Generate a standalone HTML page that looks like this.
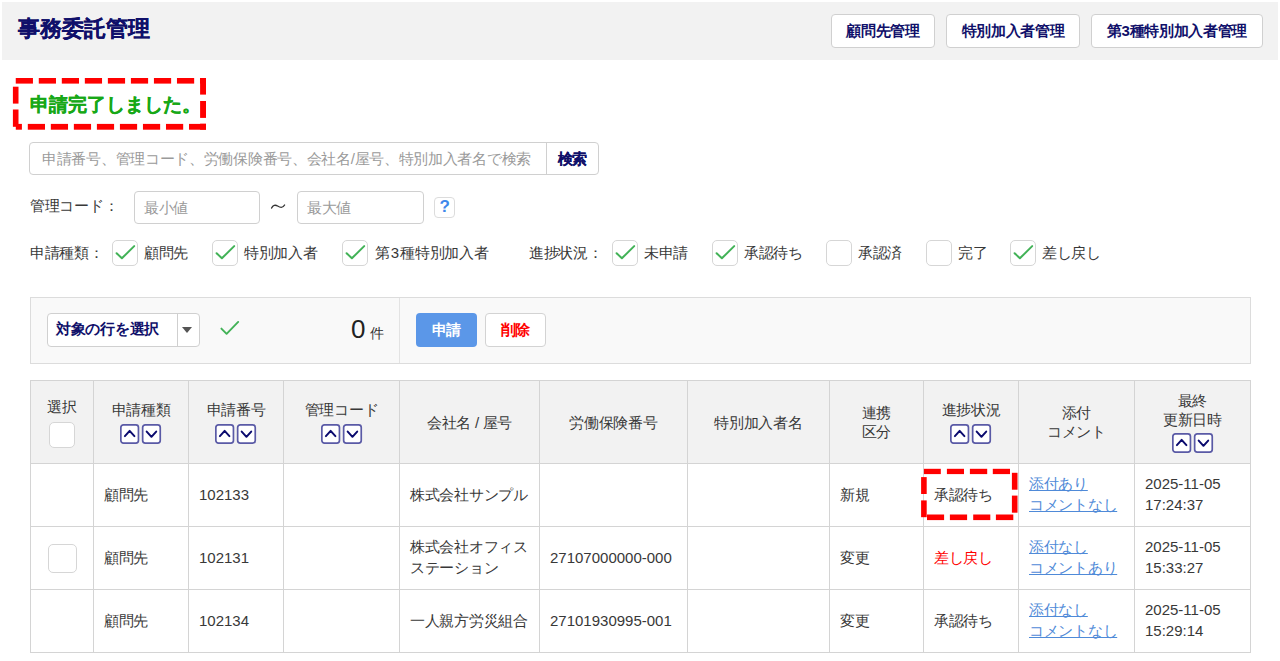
<!DOCTYPE html>
<html lang="ja">
<head>
<meta charset="utf-8">
<title>事務委託管理</title>
<style>
*{box-sizing:border-box}
html,body{margin:0;padding:0;background:#fff}
body{width:1280px;height:661px;position:relative;overflow:hidden;font-family:"Liberation Sans",sans-serif;color:#333;font-size:15px;letter-spacing:-0.3px}
.abs{position:absolute}
.hdr{left:2px;top:2px;width:1276px;height:58px;background:#f2f2f2}
.title{left:18px;top:15px;font-size:22px;letter-spacing:0;font-weight:bold;color:#10106a;-webkit-text-stroke:0.2px #10106a;line-height:28px;white-space:nowrap}
.nbtn{top:14px;height:34px;background:#fff;border:1px solid #d0d0d0;border-radius:4px;font-weight:bold;color:#10106a;font-size:15px;line-height:32px;text-align:center;white-space:nowrap}
.msg{left:30px;top:93px;font-size:19px;letter-spacing:0;font-weight:bold;color:#17a817;-webkit-text-stroke:0.3px #17a817;line-height:24px;white-space:nowrap}
.inp{background:#fff;border:1px solid #d0d0d0;border-radius:4px;color:#9a9a9a;font-size:15px;line-height:31px;white-space:nowrap;overflow:hidden}
.lbl{font-size:15px;color:#383838;line-height:20px;white-space:nowrap}
.cb{width:26px;height:26px;border:1.5px solid #d6d6d6;border-radius:5px;background:#fff}
.chk{position:absolute;left:-1.5px;top:-1.5px}
.panel{left:30px;top:297px;width:1221px;height:67px;background:#f9f9f9;border:1px solid #dcdcdc}
.vl{width:1px;background:#d4d4d4}
.hl{height:1px;background:#d4d4d4}
.cell{position:absolute;display:flex;align-items:center;justify-content:center;text-align:center;line-height:19px;color:#383838}
.left{justify-content:flex-start;text-align:left;padding-left:10px;padding-bottom:2px;line-height:21px}
.ht{position:absolute;left:0;width:100%;text-align:center;line-height:19px;color:#383838;white-space:nowrap}
.hs{position:absolute;left:50%;margin-left:-21px}
.n{font-size:15px;letter-spacing:0}
.link{color:#4f8ad8;text-decoration:underline;text-underline-offset:1px}
</style>
</head>
<body>
<div class="abs hdr"></div>
<div class="abs title">事務委託管理</div>
<div class="abs nbtn" style="left:831px;width:104px">顧問先管理</div>
<div class="abs nbtn" style="left:946px;width:134px">特別加入者管理</div>
<div class="abs nbtn" style="left:1091px;width:172px">第3種特別加入者管理</div>
<svg class="abs" style="left:0;top:0" width="260" height="150" fill="#ff0000"><rect x="15.75" y="78.00" width="17.20" height="5.60"/><rect x="38.78" y="78.00" width="17.20" height="5.60"/><rect x="61.81" y="78.00" width="17.20" height="5.60"/><rect x="84.84" y="78.00" width="17.20" height="5.60"/><rect x="107.87" y="78.00" width="17.20" height="5.60"/><rect x="130.90" y="78.00" width="17.20" height="5.60"/><rect x="153.93" y="78.00" width="17.20" height="5.60"/><rect x="176.96" y="78.00" width="17.20" height="5.60"/><rect x="199.99" y="78.00" width="6.01" height="5.60"/><rect x="200.10" y="78.00" width="5.90" height="16.60"/><rect x="200.10" y="101.00" width="5.90" height="16.90"/><rect x="200.10" y="123.70" width="5.90" height="6.00"/><rect x="27.80" y="123.90" width="17.20" height="5.80"/><rect x="50.83" y="123.90" width="17.20" height="5.80"/><rect x="73.86" y="123.90" width="17.20" height="5.80"/><rect x="96.89" y="123.90" width="17.20" height="5.80"/><rect x="119.92" y="123.90" width="17.20" height="5.80"/><rect x="142.95" y="123.90" width="17.20" height="5.80"/><rect x="165.98" y="123.90" width="17.20" height="5.80"/><rect x="189.01" y="123.90" width="16.99" height="5.80"/><rect x="15.80" y="123.90" width="6.10" height="5.80"/><rect x="12.90" y="86.70" width="5.60" height="16.90"/><rect x="12.90" y="109.50" width="5.60" height="17.30"/></svg>
<div class="abs msg">申請完了しました。</div>
<div class="abs inp" style="left:29px;top:142px;width:570px;height:33px;padding-left:12px;letter-spacing:-0.3px">申請番号、管理コード、労働保険番号、会社名/屋号、特別加入者名で検索</div>
<div class="abs" style="left:546px;top:143px;width:1px;height:31px;background:#d0d0d0"></div>
<div class="abs" style="left:547px;top:142px;width:51px;height:33px;line-height:33px;text-align:center;font-weight:bold;color:#10106a;-webkit-text-stroke:0.15px #10106a">検索</div>
<div class="abs lbl" style="left:30px;top:196px">管理コード：</div>
<div class="abs inp" style="left:134px;top:191px;width:126px;height:33px;padding-left:9px">最小値</div>
<svg class="abs" style="left:270px;top:203px" width="16" height="7" viewBox="0 0 16 7"><path d="M1.6 5 C3 2.2 5.2 1.6 7.6 3 C10 4.5 12.6 5.4 14.6 2" fill="none" stroke="#333" stroke-width="1.4" stroke-linecap="round"/></svg>
<div class="abs inp" style="left:297px;top:191px;width:127px;height:33px;padding-left:9px">最大値</div>
<div class="abs" style="left:434px;top:197px;width:21px;height:21px;border:1.5px solid #dcdcdc;border-radius:4px;background:#fff;color:#3f88ea;font-weight:bold;font-size:17px;line-height:18px;text-align:center">?</div>
<div class="abs lbl" style="left:30px;top:243px">申請種類：</div>
<div class="abs cb" style="left:112px;top:240px"><svg class="chk" width="26" height="26" viewBox="0 0 26 26"><path d="M4.6 13.2 L9.9 18.3 L22.2 6.1" fill="none" stroke="#42b257" stroke-width="2" stroke-linecap="round" stroke-linejoin="round"/></svg></div>
<div class="abs lbl" style="left:144px;top:243px">顧問先</div>
<div class="abs cb" style="left:212px;top:240px"><svg class="chk" width="26" height="26" viewBox="0 0 26 26"><path d="M4.6 13.2 L9.9 18.3 L22.2 6.1" fill="none" stroke="#42b257" stroke-width="2" stroke-linecap="round" stroke-linejoin="round"/></svg></div>
<div class="abs lbl" style="left:244px;top:243px">特別加入者</div>
<div class="abs cb" style="left:342px;top:240px"><svg class="chk" width="26" height="26" viewBox="0 0 26 26"><path d="M4.6 13.2 L9.9 18.3 L22.2 6.1" fill="none" stroke="#42b257" stroke-width="2" stroke-linecap="round" stroke-linejoin="round"/></svg></div>
<div class="abs lbl" style="left:375px;top:243px">第<span style="margin:0 1.5px 0 1px">3</span>種特別加入者</div>
<div class="abs lbl" style="left:529px;top:243px">進捗状況：</div>
<div class="abs cb" style="left:612px;top:240px"><svg class="chk" width="26" height="26" viewBox="0 0 26 26"><path d="M4.6 13.2 L9.9 18.3 L22.2 6.1" fill="none" stroke="#42b257" stroke-width="2" stroke-linecap="round" stroke-linejoin="round"/></svg></div>
<div class="abs lbl" style="left:644px;top:243px">未申請</div>
<div class="abs cb" style="left:712px;top:240px"><svg class="chk" width="26" height="26" viewBox="0 0 26 26"><path d="M4.6 13.2 L9.9 18.3 L22.2 6.1" fill="none" stroke="#42b257" stroke-width="2" stroke-linecap="round" stroke-linejoin="round"/></svg></div>
<div class="abs lbl" style="left:744px;top:243px">承認待ち</div>
<div class="abs cb" style="left:826px;top:240px"></div>
<div class="abs lbl" style="left:858px;top:243px">承認済</div>
<div class="abs cb" style="left:926px;top:240px"></div>
<div class="abs lbl" style="left:958px;top:243px">完了</div>
<div class="abs cb" style="left:1010px;top:240px"><svg class="chk" width="26" height="26" viewBox="0 0 26 26"><path d="M4.6 13.2 L9.9 18.3 L22.2 6.1" fill="none" stroke="#42b257" stroke-width="2" stroke-linecap="round" stroke-linejoin="round"/></svg></div>
<div class="abs lbl" style="left:1042px;top:243px">差し戻し</div>
<div class="abs panel"></div>
<div class="abs" style="left:399px;top:298px;width:1px;height:65px;background:#e3e3e3"></div>
<div class="abs" style="left:47px;top:313px;width:153px;height:34px;background:#fff;border:1px solid #d0d0d0;border-radius:4px"></div>
<div class="abs" style="left:177px;top:314px;width:1px;height:32px;background:#cfcfcf"></div>
<div class="abs" style="left:56px;top:319px;font-weight:bold;color:#10106a;line-height:20px;white-space:nowrap">対象の行を選択</div>
<div class="abs" style="left:182px;top:327px;width:0;height:0;border-left:5.5px solid transparent;border-right:5.5px solid transparent;border-top:6px solid #555"></div>
<svg class="abs" style="left:219px;top:320px" width="21" height="16" viewBox="0 0 21 16"><path d="M2.4 8.6 L7.6 13.8 L19.2 1.9" fill="none" stroke="#42b257" stroke-width="1.9" stroke-linecap="round" stroke-linejoin="round"/></svg>
<div class="abs" style="left:351px;top:314px;font-size:26px;line-height:30px;color:#222;letter-spacing:0">0</div>
<div class="abs" style="left:370px;top:323px;font-size:14px;line-height:20px;color:#333">件</div>
<div class="abs" style="left:416px;top:313px;width:61px;height:34px;background:#5b97e8;border-radius:4px;color:#fff;font-weight:bold;text-align:center;line-height:34px">申請</div>
<div class="abs" style="left:485px;top:313px;width:61px;height:34px;background:#fff;border:1px solid #d3d3d3;border-radius:4px;color:#f00;font-weight:bold;text-align:center;line-height:32px">削除</div>
<div class="abs" style="left:30px;top:380px;width:1220px;height:83px;background:#f2f2f2"></div>
<div class="abs vl" style="left:30px;top:380px;height:273px"></div>
<div class="abs vl" style="left:93px;top:380px;height:273px"></div>
<div class="abs vl" style="left:188px;top:380px;height:273px"></div>
<div class="abs vl" style="left:283px;top:380px;height:273px"></div>
<div class="abs vl" style="left:399px;top:380px;height:273px"></div>
<div class="abs vl" style="left:539px;top:380px;height:273px"></div>
<div class="abs vl" style="left:687px;top:380px;height:273px"></div>
<div class="abs vl" style="left:829px;top:380px;height:273px"></div>
<div class="abs vl" style="left:923px;top:380px;height:273px"></div>
<div class="abs vl" style="left:1018px;top:380px;height:273px"></div>
<div class="abs vl" style="left:1134px;top:380px;height:273px"></div>
<div class="abs vl" style="left:1250px;top:380px;height:273px"></div>
<div class="abs hl" style="left:30px;top:380px;width:1221px"></div>
<div class="abs hl" style="left:30px;top:463px;width:1221px"></div>
<div class="abs hl" style="left:30px;top:526px;width:1221px"></div>
<div class="abs hl" style="left:30px;top:589px;width:1221px"></div>
<div class="abs hl" style="left:30px;top:652px;width:1221px"></div>
<div class="abs" style="left:31px;top:381px;width:62px;height:82px"><div class="ht" style="top:16px">選択</div><div class="cb" style="position:absolute;left:50%;margin-left:-13px;top:41px"></div></div>
<div class="abs" style="left:94px;top:381px;width:94px;height:82px"><div class="ht" style="top:19px">申請種類</div><div class="hs" style="top:43px"><svg width="42" height="21" viewBox="0 0 42 21"><rect x="0.85" y="0.85" width="17.6" height="18.2" rx="2.6" fill="#fff" stroke="#5a5aa6" stroke-width="1.7"/><rect x="22.65" y="0.85" width="17.6" height="18.2" rx="2.6" fill="#fff" stroke="#5a5aa6" stroke-width="1.7"/><path d="M4.9 12.1 L9.65 6.9 L14.4 12.1" fill="none" stroke="#0a0a6e" stroke-width="2" stroke-linecap="round" stroke-linejoin="round"/><path d="M26.7 7.6 L31.45 12.8 L36.2 7.6" fill="none" stroke="#0a0a6e" stroke-width="2" stroke-linecap="round" stroke-linejoin="round"/></svg></div></div>
<div class="abs" style="left:189px;top:381px;width:94px;height:82px"><div class="ht" style="top:19px">申請番号</div><div class="hs" style="top:43px"><svg width="42" height="21" viewBox="0 0 42 21"><rect x="0.85" y="0.85" width="17.6" height="18.2" rx="2.6" fill="#fff" stroke="#5a5aa6" stroke-width="1.7"/><rect x="22.65" y="0.85" width="17.6" height="18.2" rx="2.6" fill="#fff" stroke="#5a5aa6" stroke-width="1.7"/><path d="M4.9 12.1 L9.65 6.9 L14.4 12.1" fill="none" stroke="#0a0a6e" stroke-width="2" stroke-linecap="round" stroke-linejoin="round"/><path d="M26.7 7.6 L31.45 12.8 L36.2 7.6" fill="none" stroke="#0a0a6e" stroke-width="2" stroke-linecap="round" stroke-linejoin="round"/></svg></div></div>
<div class="abs" style="left:284px;top:381px;width:115px;height:82px"><div class="ht" style="top:19px">管理コード</div><div class="hs" style="top:43px"><svg width="42" height="21" viewBox="0 0 42 21"><rect x="0.85" y="0.85" width="17.6" height="18.2" rx="2.6" fill="#fff" stroke="#5a5aa6" stroke-width="1.7"/><rect x="22.65" y="0.85" width="17.6" height="18.2" rx="2.6" fill="#fff" stroke="#5a5aa6" stroke-width="1.7"/><path d="M4.9 12.1 L9.65 6.9 L14.4 12.1" fill="none" stroke="#0a0a6e" stroke-width="2" stroke-linecap="round" stroke-linejoin="round"/><path d="M26.7 7.6 L31.45 12.8 L36.2 7.6" fill="none" stroke="#0a0a6e" stroke-width="2" stroke-linecap="round" stroke-linejoin="round"/></svg></div></div>
<div class="cell" style="left:400px;top:381px;width:139px;height:82px;">会社名 / 屋号</div>
<div class="cell" style="left:540px;top:381px;width:147px;height:82px;">労働保険番号</div>
<div class="cell" style="left:688px;top:381px;width:141px;height:82px;">特別加入者名</div>
<div class="cell" style="left:830px;top:381px;width:93px;height:82px;">連携<br>区分</div>
<div class="abs" style="left:924px;top:381px;width:94px;height:82px"><div class="ht" style="top:19px">進捗状況</div><div class="hs" style="top:43px"><svg width="42" height="21" viewBox="0 0 42 21"><rect x="0.85" y="0.85" width="17.6" height="18.2" rx="2.6" fill="#fff" stroke="#5a5aa6" stroke-width="1.7"/><rect x="22.65" y="0.85" width="17.6" height="18.2" rx="2.6" fill="#fff" stroke="#5a5aa6" stroke-width="1.7"/><path d="M4.9 12.1 L9.65 6.9 L14.4 12.1" fill="none" stroke="#0a0a6e" stroke-width="2" stroke-linecap="round" stroke-linejoin="round"/><path d="M26.7 7.6 L31.45 12.8 L36.2 7.6" fill="none" stroke="#0a0a6e" stroke-width="2" stroke-linecap="round" stroke-linejoin="round"/></svg></div></div>
<div class="cell" style="left:1019px;top:381px;width:115px;height:82px;">添付<br>コメント</div>
<div class="abs" style="left:1135px;top:381px;width:115px;height:82px"><div class="ht" style="top:10px">最終</div><div class="ht" style="top:29px">更新日時</div><div class="hs" style="top:52px"><svg width="42" height="21" viewBox="0 0 42 21"><rect x="0.85" y="0.85" width="17.6" height="18.2" rx="2.6" fill="#fff" stroke="#5a5aa6" stroke-width="1.7"/><rect x="22.65" y="0.85" width="17.6" height="18.2" rx="2.6" fill="#fff" stroke="#5a5aa6" stroke-width="1.7"/><path d="M4.9 12.1 L9.65 6.9 L14.4 12.1" fill="none" stroke="#0a0a6e" stroke-width="2" stroke-linecap="round" stroke-linejoin="round"/><path d="M26.7 7.6 L31.45 12.8 L36.2 7.6" fill="none" stroke="#0a0a6e" stroke-width="2" stroke-linecap="round" stroke-linejoin="round"/></svg></div></div>
<div class="cell left" style="left:94px;top:464px;width:94px;height:62px;">顧問先</div>
<div class="cell left" style="left:189px;top:464px;width:94px;height:62px;"><span class="n">102133</span></div>
<div class="cell left" style="left:400px;top:464px;width:139px;height:62px;">株式会社サンプル</div>
<div class="cell left" style="left:830px;top:464px;width:93px;height:62px;">新規</div>
<div class="cell left" style="left:924px;top:464px;width:94px;height:62px;">承認待ち</div>
<div class="cell left" style="left:1019px;top:464px;width:115px;height:62px;"><div><span class="link">添付あり</span><br><span class="link">コメントなし</span></div></div>
<div class="cell left" style="left:1135px;top:464px;width:115px;height:62px;"><div class="n">2025-11-05<br>17:24:37</div></div>
<div class="cell" style="left:31px;top:527px;width:62px;height:62px;"><div class="cb" style="position:relative;width:29px;height:29px"></div></div>
<div class="cell left" style="left:94px;top:527px;width:94px;height:62px;">顧問先</div>
<div class="cell left" style="left:189px;top:527px;width:94px;height:62px;"><span class="n">102131</span></div>
<div class="cell left" style="left:400px;top:527px;width:139px;height:62px;">株式会社オフィス<br>ステーション</div>
<div class="cell left" style="left:540px;top:527px;width:147px;height:62px;"><span class="n">27107000000-000</span></div>
<div class="cell left" style="left:830px;top:527px;width:93px;height:62px;">変更</div>
<div class="cell left" style="left:924px;top:527px;width:94px;height:62px;"><span style="color:#f00">差し戻し</span></div>
<div class="cell left" style="left:1019px;top:527px;width:115px;height:62px;"><div><span class="link">添付なし</span><br><span class="link">コメントあり</span></div></div>
<div class="cell left" style="left:1135px;top:527px;width:115px;height:62px;"><div class="n">2025-11-05<br>15:33:27</div></div>
<div class="cell left" style="left:94px;top:590px;width:94px;height:62px;">顧問先</div>
<div class="cell left" style="left:189px;top:590px;width:94px;height:62px;"><span class="n">102134</span></div>
<div class="cell left" style="left:400px;top:590px;width:139px;height:62px;">一人親方労災組合</div>
<div class="cell left" style="left:540px;top:590px;width:147px;height:62px;"><span class="n">27101930995-001</span></div>
<div class="cell left" style="left:830px;top:590px;width:93px;height:62px;">変更</div>
<div class="cell left" style="left:924px;top:590px;width:94px;height:62px;">承認待ち</div>
<div class="cell left" style="left:1019px;top:590px;width:115px;height:62px;"><div><span class="link">添付なし</span><br><span class="link">コメントなし</span></div></div>
<div class="cell left" style="left:1135px;top:590px;width:115px;height:62px;"><div class="n">2025-11-05<br>15:29:14</div></div>
<svg class="abs" style="left:0;top:0" width="1280" height="661" fill="#ff0000"><rect x="923.90" y="468.80" width="16.90" height="5.30"/><rect x="946.90" y="468.80" width="17.10" height="5.30"/><rect x="969.90" y="468.80" width="17.30" height="5.30"/><rect x="992.80" y="468.80" width="17.20" height="5.30"/><rect x="1011.90" y="472.80" width="5.60" height="16.90"/><rect x="1011.90" y="495.60" width="5.60" height="17.10"/><rect x="927.00" y="514.50" width="17.10" height="5.60"/><rect x="949.90" y="514.50" width="17.20" height="5.60"/><rect x="973.20" y="514.50" width="17.10" height="5.60"/><rect x="995.90" y="514.50" width="17.40" height="5.60"/><rect x="921.10" y="477.10" width="5.60" height="16.90"/><rect x="921.10" y="500.40" width="5.60" height="16.80"/></svg>
</body>
</html>
